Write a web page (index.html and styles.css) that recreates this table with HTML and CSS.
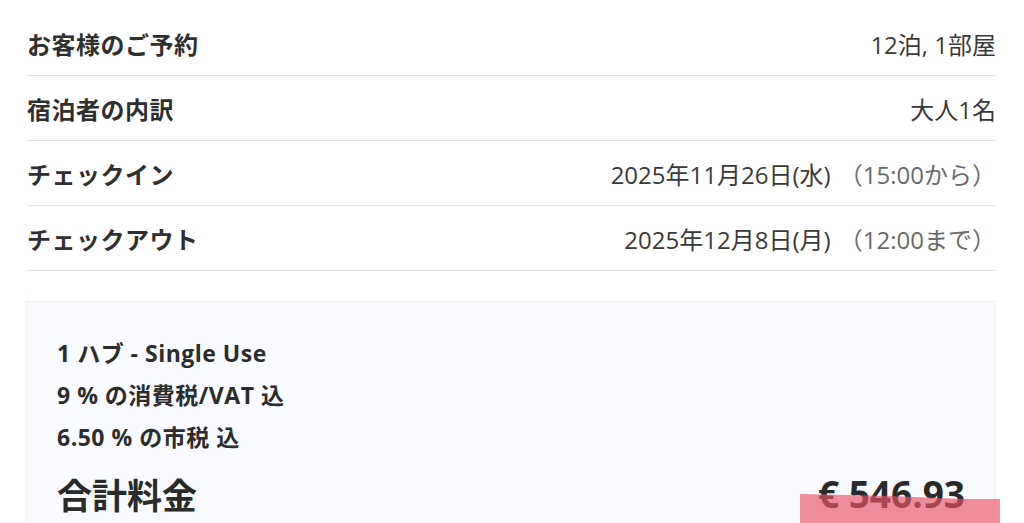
FILE: index.html
```html
<!DOCTYPE html>
<html lang="ja">
<head>
    <meta charset="UTF-8">
    <title>ご予約内容</title>
    <link rel="stylesheet" href="styles.css">
</head>
<body>
<div class="summary">
    <ul class="rows">
        <li>
            <span class="label">お客様のご予約</span>
            <span class="value">12泊, 1部屋</span>
        </li>
        <li>
            <span class="label">宿泊者の内訳</span>
            <span class="value">大人1名</span>
        </li>
        <li>
            <span class="label">チェックイン</span>
            <span class="value">2025年11月26日(水) <em>（15:00から）</em></span>
        </li>
        <li>
            <span class="label">チェックアウト</span>
            <span class="value">2025年12月8日(月) <em>（12:00まで）</em></span>
        </li>
    </ul>

    <div class="price-box">
        <p class="line">1 ハブ - Single Use</p>
        <p class="line">9 % の消費税/VAT 込</p>
        <p class="line">6.50 % の市税 込</p>
        <div class="total">
            <span class="total-label">合計料金</span>
            <span class="total-price">€ 546.93</span>
        </div>
    </div>
</div>
</body>
</html>
```

FILE: styles.css
```css
*{
    margin: 0;
    padding: 0;
    box-sizing: border-box;
}
body{
    font-family: "Open Sans", "Noto Sans CJK JP", sans-serif;
    color: #333;
    background: #fff;
    overflow: hidden;
}
ul{
    list-style: none;
}

.summary{
    width: 969px;
    margin-left: 27px;
    padding-top: 11px;
}

/*予約情報の行*/
.rows li{
    display: flex;
    justify-content: space-between;
    align-items: center;
    height: 65px;
    border-bottom: 1px solid #e3e3e3;
}
.rows .label{
    font-size: 24px;
    font-weight: bold;
    color: #2f2f2f;
    letter-spacing: 0.5px;
}
.rows .value{
    font-size: 24px;
    color: #3a3a3a;
}
.rows .value em{
    font-style: normal;
    color: #6a6a6a;
    margin-left: 2px;
}

/*料金ボックス*/
.price-box{
    margin-top: 30px;
    margin-left: -1px;
    padding: 30px 30px 0 30px;
    height: 240px;
    background: #f9fbfe;
    border: 1px solid #edf2fa;
}
.price-box .line{
    font-size: 23px;
    font-weight: bold;
    line-height: 42px;
    letter-spacing: 0.5px;
    color: #2c2c2c;
}
.total{
    display: flex;
    justify-content: space-between;
    align-items: center;
    margin-top: 10px;
}
.total-label{
    font-size: 35px;
    font-weight: bold;
    color: #2a2a2a;
}
.total-price{
    position: relative;
    font-size: 37px;
    font-weight: bold;
    color: #2a2a2a;
}
/*マーカーの強調*/
.total-price::after{
    content: "";
    position: absolute;
    left: -18px;
    right: -35px;
    top: 26px;
    height: 60px;
    background: rgba(232, 84, 100, 0.66);
    clip-path: polygon(0 0, 45% 2px, 82% 5px, 100% 5px, 100% 100%, 0 100%);
}
```
